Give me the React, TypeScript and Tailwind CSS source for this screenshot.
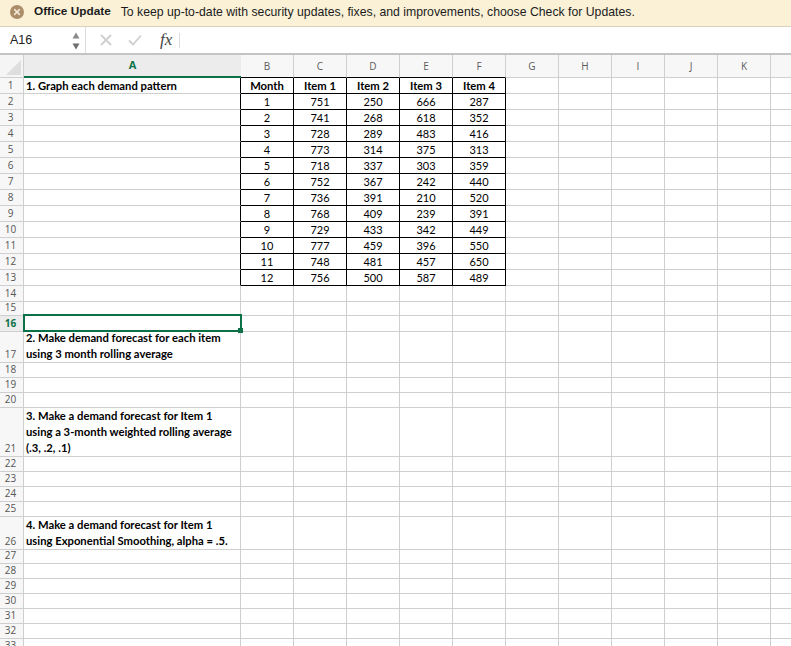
const COLS = ["B", "C", "D", "E", "F", "G", "H", "I", "J", "K", "L"];

const ITEMS: number[][] = [
  [751, 250, 666, 287],
  [741, 268, 618, 352],
  [728, 289, 483, 416],
  [773, 314, 375, 313],
  [718, 337, 303, 359],
  [752, 367, 242, 440],
  [736, 391, 210, 520],
  [768, 409, 239, 391],
  [729, 433, 342, 449],
  [777, 459, 396, 550],
  [748, 481, 457, 650],
  [756, 500, 587, 489],
];

const TABLE_HEAD = ["Month", "Item 1", "Item 2", "Item 3", "Item 4"];

// sheet rows by number: height plus what sits in column A
const ROW_HEIGHTS: Record<number, number> = {
  14: 16, 15: 14, 17: 31, 18: 15, 19: 15, 20: 15, 21: 49, 22: 15, 23: 15, 24: 15, 25: 15, 26: 33,
  27: 14, 28: 15, 29: 15, 30: 15, 31: 15, 32: 15, 33: 15,
};
const NOTES: Record<number, string[]> = {
  1: ["1. Graph each demand pattern"],
  17: ["2. Make demand forecast for each item", "using 3 month rolling average"],
  21: ["3. Make a demand forecast for Item 1", "using a 3-month weighted rolling average", "(.3, .2, .1)"],
  26: ["4. Make a demand forecast for Item 1", "using Exponential Smoothing, alpha = .5."],
};

function tableValue(row: number, col: number): string | null {
  if (col > 4 || row > 13) return null;
  if (row === 1) return TABLE_HEAD[col];
  if (col === 0) return String(row - 1);
  return String(ITEMS[row - 2][col - 1]);
}

function SheetRow({ row }: { row: number }) {
  const height = ROW_HEIGHTS[row] ?? 16;
  const note = NOTES[row];
  const selected = row === 16;
  return (
    <div className="flex shrink-0" style={{ height }}>
      <div
        className={
          "flex w-6 shrink-0 items-end justify-center border-r border-b border-[#cfcfcf] pr-[2px] font-['Open_Sans',sans-serif] text-[10px] leading-[15px] " +
          (selected ? "bg-[#ececec] font-bold text-[#0d7148]" : "bg-[#f7f7f7] text-[#555]")
        }
      >
        {row}
      </div>
      <div
        className={
          "relative w-[217px] shrink-0 border-b border-r border-b-[#cfcfcf] pl-[2px] text-[11.25px] leading-[16px] font-bold text-black " +
          (row <= 13 ? "border-r-black" : "border-r-[#cfcfcf]")
        }
      >
        <div className={"absolute right-0 left-[2px] " + (row === 1 ? "-bottom-[1px]" : "bottom-0")}>
          {note?.map((line) => (
            <div key={line} className="whitespace-nowrap">
              {line}
            </div>
          ))}
        </div>
        {selected && (
          <div className="absolute -top-[2px] -right-[2px] -bottom-[1px] -left-[1px] z-10 border-2 border-[#0d7148]">
            <div className="absolute -right-[3px] -bottom-[3px] h-[5px] w-[5px] bg-[#0d7148]" />
          </div>
        )}
      </div>
      {COLS.map((c, i) => {
        const value = tableValue(row, i);
        const inTable = i <= 4 && row <= 13;
        return (
          <div
            key={c}
            className={
              "flex w-[53px] shrink-0 items-center justify-center text-black " +
              (inTable
                ? "border-r border-b border-black pt-[1px] " + (row === 1 ? "text-[11.25px] font-bold" : "text-[11px]")
                : "border-r border-b border-[#cfcfcf]")
            }
          >
            {value}
          </div>
        );
      })}
    </div>
  );
}

export default function App() {
  const rows = Array.from({ length: 33 }, (_, i) => i + 1);
  return (
    <div className="flex h-[646px] w-[791px] flex-col overflow-hidden bg-white font-['Lato',sans-serif]">
      {/* update banner */}
      <div className="flex h-[27px] shrink-0 items-center border-b border-[#d9d2bb] bg-[#faf1d7] pb-[2px] pl-[10px] font-['Liberation_Sans',sans-serif] text-[12.25px] text-[#1c1c1c]">
        <svg viewBox="0 0 14 14" className="h-[14px] w-[14px] shrink-0">
          <circle cx="7" cy="7" r="7" fill="#ab8d69" />
          <path d="M4.6 4.6l4.8 4.8M9.4 4.6l-4.8 4.8" stroke="#f3e9d8" strokeWidth="1.5" strokeLinecap="round" />
        </svg>
        <span className="ml-[10px] text-[11.8px] font-bold">Office Update</span>
        <span className="ml-[10px]">To keep up-to-date with security updates, fixes, and improvements, choose Check for Updates.</span>
      </div>

      {/* formula bar */}
      <div className="flex h-[28px] shrink-0 items-center border-b-2 border-[#c4c4c4] bg-white">
        <div className="flex h-full w-[86px] shrink-0 items-center justify-between border-r border-[#dcdcdc] pt-[1px] pr-[5px] pl-[10px] font-['Liberation_Sans',sans-serif] text-[12.5px] text-[#222]">
          A16
          <svg viewBox="0 0 8 18" className="h-[18px] w-[8px]">
            <path d="M4 0.5l3.5 6H.5z" fill="#8a8a8a" />
            <path d="M4 17.5L.5 11.5h7z" fill="#6e6e6e" />
          </svg>
        </div>
        <svg viewBox="0 0 12 12" className="ml-[14px] h-[12px] w-[12px]">
          <path d="M1 1l10 10M11 1L1 11" stroke="#cfcfcf" strokeWidth="1.8" />
        </svg>
        <svg viewBox="0 0 14 12" className="ml-[16px] h-[12px] w-[14px]">
          <path d="M1 6.5l4 4L13 1.5" stroke="#cfcfcf" strokeWidth="1.8" fill="none" />
        </svg>
        <span className="ml-[18px] font-['Liberation_Serif',serif] text-[17px] text-[#444] italic">fx</span>
        <div className="ml-[7px] h-[15px] w-px bg-[#dcdcdc]" />
      </div>

      {/* column headers */}
      <div className="flex h-[23px] shrink-0 font-['Open_Sans',sans-serif] text-[10px] text-[#5c5c5c]">
        <div className="relative w-6 shrink-0 border-r border-b border-[#cfcfcf] bg-[#f5f5f5]">
          <svg viewBox="0 0 15 15" className="absolute right-[2px] bottom-[2px] h-[15px] w-[15px]">
            <path d="M15 0v15H0z" fill="#dedede" />
          </svg>
        </div>
        <div className="flex w-[217px] shrink-0 items-center justify-center border-b-2 border-[#0d7148] bg-[#ececec] text-[11px] font-bold text-[#0d7148]">
          A
        </div>
        {COLS.map((c, i) => (
          <div
            key={c}
            className={
              "flex w-[53px] shrink-0 items-center justify-center border-r border-b border-r-[#cfcfcf] bg-[#f7f7f7] " +
              (i <= 4 ? "border-b-black" : "border-b-[#cfcfcf]")
            }
          >
            {c}
          </div>
        ))}
      </div>

      {rows.map((r) => (
        <SheetRow key={r} row={r} />
      ))}
    </div>
  );
}
